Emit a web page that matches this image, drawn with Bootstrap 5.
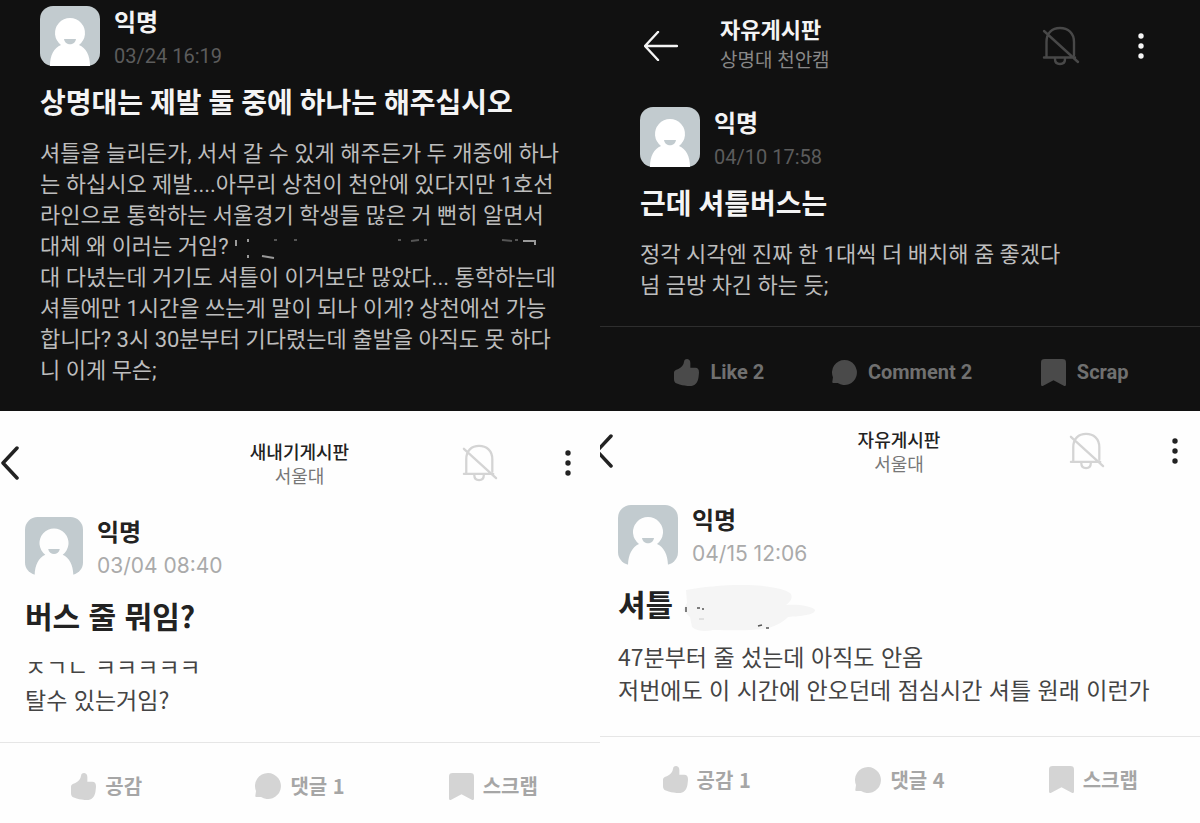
<!DOCTYPE html>
<html lang="ko">
<head>
<meta charset="utf-8">
<meta name="viewport" content="width=device-width, initial-scale=1">
<title>셔틀버스 게시글 모음</title>
<link href="https://cdn.jsdelivr.net/npm/bootstrap@5.3.0/dist/css/bootstrap.min.css" rel="stylesheet">
<style>
body{background:#fefefe;font-family:Roboto,"Noto Sans CJK KR",sans-serif}
.post{--ink:#222;--text:#444;--muted:#aaa;--sub:#777;--bell:#d4d4d4;--rule:#e6e6e6;--icon:#d4d4d4;--label:#a6a6a6;background:#fefefe;color:var(--ink)}
.post.night{--ink:#f4f4f4;--text:#bdbdbd;--muted:#5c5c5c;--sub:#888;--bell:#484848;--rule:#2e2e2e;--icon:#4a4a4a;--label:#707070;background:#111}
.post.day{font-family:"Noto Sans CJK KR",sans-serif}
.post svg{display:block;flex:none}
.plain{background:none;border:0;padding:0;color:inherit}
.post header{margin-bottom:31px}
.titles{padding-left:42px}
.board{font-size:22px;line-height:30px;font-weight:700}
.school{font-size:19px;line-height:30px;color:var(--sub)}
.day .board{font-size:18px;line-height:24px;font-weight:500}
.day .school{font-size:18px;line-height:24px}
.day header{display:grid;grid-template-columns:1fr auto 1fr;margin-bottom:30px}
.bell{color:var(--bell);margin-right:58px}
.day .bell{margin-right:67px}
.author{gap:14px}
.who{font-size:24px;line-height:34px;font-weight:700}
.when{font-size:20px;line-height:32px;color:var(--muted)}
.day .who{line-height:28px;margin-bottom:4px}
.day .when{font-family:Inter,sans-serif;font-size:21px;line-height:34px}
.subject{font-size:28px;line-height:36px;font-weight:700;margin:14px 0 0}
.day .subject{font-size:30px}
.words{font-size:22px;line-height:31px;color:var(--text);margin:16px 0 0}
.day .words{font-size:23px;line-height:33px;margin-top:17px}
.words svg,.subject svg{display:inline-block;vertical-align:middle}
.subject svg{margin:-8px 0}
.actions{border-top:1px solid var(--rule);padding:30px 24px 24px 28px}
.day .actions{padding:28px 10px 20px}
.actions button{flex:1 1 0;font-size:20px;line-height:30px;font-weight:700;color:var(--label);gap:11px}
.actions svg{color:var(--icon)}
.day .actions button{gap:9px}
.pad-a{padding:6px 40px 25px}
.pad-b{padding:16px 40px 0}
.pad-c{padding:28px 25px 26px 0}
.pad-d{padding:16px 18px 30px 0}
.inset-c{padding-left:25px}
.inset-d{padding-left:18px}
</style>
</head>
<body>
<svg width="0" height="0" class="position-absolute" aria-hidden="true">
<symbol id="face" viewBox="0 0 60 60"><rect width="60" height="60" rx="13" fill="#c2cbcf"/><path d="M10 60c0-11 4-18 11-21a15 15 0 1 1 18 0c7 3 11 10 11 21z" fill="#fff"/><path d="M24 33h12c-1 7-11 7-12 0z" fill="#c2cbcf"/></symbol>
<symbol id="face-day" viewBox="0 0 60 60"><rect width="60" height="60" rx="13" fill="#c2cbcf"/><path d="M10 61c0-11 4-19 11-22a15 15 0 1 1 18 0c7 3 11 11 11 22z" fill="#fefefe"/><path d="M24 33h12c-1 7-11 7-12 0z" fill="#c2cbcf"/></symbol>
<symbol id="bell" viewBox="0 0 38 40"><g fill="none" stroke="currentColor" stroke-width="2.4" stroke-linecap="round"><path d="M2 31.500H33M4.500 31V16C4.500 7 10 2 18 2s14 5 14 14v13M13 33c0 3 2 5 5 5s5-2 5-5M2 5l34 31"/></g></symbol>
<symbol id="dots" viewBox="0 0 6 26"><g fill="currentColor"><circle cx="3" cy="3" r="2.700"/><circle cx="3" cy="13" r="2.700"/><circle cx="3" cy="23" r="2.700"/></g></symbol>
<symbol id="like" viewBox="0 0 26 28"><path fill="currentColor" d="M0 15c0-3 1-3.500 4-4.500C8 9 10 6 10.500 2.500 11-1 17-1 17 4v5h5c3 0 4 2 4 5-.3 4-.5 7-2 10-2 4-6 4.500-10 4-4-.3-7-1-11-2.500C1 25 0 23 0 21z"/></symbol>
<symbol id="talk" viewBox="0 0 26 26"><path fill="currentColor" d="M13 0a13 13 0 1 1-7 24H2c-1.500 0-2-.5-1.600-1.800L1 18A13 13 0 0 1 13 0z"/></symbol>
<symbol id="scrap" viewBox="0 0 26 28"><path fill="currentColor" d="M4 0h18c3 0 4 1 4 4v22.500c0 1.500-1 2-2.300 1.200L13 22 2.300 27.700C1 28.500 0 28 0 26.500V4c0-3 1-4 4-4z"/></symbol>
</svg>
<main class="container-fluid p-0">
<div class="row g-0">
<article class="col-6 post night pad-a">
  <div class="author d-flex">
    <svg width="60" height="60" role="img" aria-label="프로필"><use href="#face"/></svg>
    <div><div class="who">익명</div><div class="when">03/24 16:19</div></div>
  </div>
  <h2 class="subject">상명대는 제발 둘 중에 하나는 해주십시오</h2>
  <p class="words text-nowrap">셔틀을 늘리든가, 서서 갈 수 있게 해주든가 두 개중에 하나<br>는 하십시오 제발....아무리 상천이 천안에 있다지만 1호선<br>라인으로 통학하는 서울경기 학생들 많은 거 뻔히 알면서<br>대체 왜 이러는 거임? <svg width="306" height="22" viewBox="0 0 306 22" aria-hidden="true"><g fill="none" stroke="#999" stroke-width="2"><path d="M2 3v6M14 2v3M14 18v3M28 19l12 2M289 4h12v4"/><path d="M40 3h3M60 3h3M164 3h3M177 4l8-1M190 3h3M268 3l10 1M281 3h3" stroke="#555"/></g></svg><br>대 다녔는데 거기도 셔틀이 이거보단 많았다... 통학하는데<br>셔틀에만 1시간을 쓰는게 말이 되나 이게? 상천에선 가능<br>합니다? 3시 30분부터 기다렸는데 출발을 아직도 못 하다<br>니 이게 무슨;</p>
</article>

<article class="col-6 post night d-flex flex-column">
  <div class="pad-b">
    <header class="d-flex align-items-center">
      <button class="plain ms-1" aria-label="뒤로"><svg width="34" height="30" viewBox="0 0 34 30" fill="none" stroke="currentColor" stroke-width="2.400" stroke-linecap="round" stroke-linejoin="round"><path d="M14 1L1 15l13 14M1 15h32"/></svg></button>
      <div class="titles flex-grow-1"><div class="board">자유게시판</div><div class="school">상명대 천안캠</div></div>
      <button class="plain bell" aria-label="알림 꺼짐"><svg width="38" height="40"><use href="#bell"/></svg></button>
      <button class="plain me-3" aria-label="더보기"><svg width="6" height="26"><use href="#dots"/></svg></button>
    </header>
    <div class="author d-flex">
      <svg width="60" height="60" role="img" aria-label="프로필"><use href="#face"/></svg>
      <div><div class="who">익명</div><div class="when">04/10 17:58</div></div>
    </div>
    <h2 class="subject">근데 셔틀버스는</h2>
    <p class="words">정각 시각엔 진짜 한 1대씩 더 배치해 줌 좋겠다<br>넘 금방 차긴 하는 듯;</p>
  </div>
  <div class="actions d-flex mt-auto">
    <button class="plain d-flex align-items-center justify-content-center"><svg width="25" height="27"><use href="#like"/></svg>Like 2</button>
    <button class="plain d-flex align-items-center justify-content-center"><svg width="25" height="25"><use href="#talk"/></svg>Comment 2</button>
    <button class="plain d-flex align-items-center justify-content-center"><svg width="25" height="27"><use href="#scrap"/></svg>Scrap</button>
  </div>
</article>

<article class="col-6 post day">
  <div class="pad-c">
    <header class="align-items-center">
      <button class="plain text-start" aria-label="뒤로"><svg width="20" height="34" viewBox="0 0 20 34" fill="none" stroke="currentColor" stroke-width="3.500" stroke-linecap="round" stroke-linejoin="round"><path d="M17 2L3 17l14 15"/></svg></button>
      <div class="text-center ps-4"><div class="board">새내기게시판</div><div class="school">서울대</div></div>
      <div class="d-flex justify-content-end align-items-center">
        <button class="plain bell" aria-label="알림 꺼짐"><svg width="36" height="38"><use href="#bell"/></svg></button>
        <button class="plain me-1" aria-label="더보기"><svg width="6" height="26"><use href="#dots"/></svg></button>
      </div>
    </header>
    <div class="inset-c">
      <div class="author d-flex">
        <svg width="58" height="58" role="img" aria-label="프로필"><use href="#face-day"/></svg>
        <div><div class="who">익명</div><div class="when">03/04 08:40</div></div>
      </div>
      <h2 class="subject">버스 줄 뭐임?</h2>
      <p class="words">ㅈㄱㄴ ㅋㅋㅋㅋㅋ<br>탈수 있는거임?</p>
    </div>
  </div>
  <div class="actions d-flex">
    <button class="plain d-flex align-items-center justify-content-center"><svg width="25" height="27"><use href="#like"/></svg>공감</button>
    <button class="plain d-flex align-items-center justify-content-center"><svg width="26" height="26"><use href="#talk"/></svg>댓글 1</button>
    <button class="plain d-flex align-items-center justify-content-center"><svg width="25" height="27"><use href="#scrap"/></svg>스크랩</button>
  </div>
</article>

<article class="col-6 post day">
  <div class="pad-d">
    <header class="align-items-center">
      <button class="plain text-start" aria-label="뒤로"><svg width="14" height="34" viewBox="6 0 14 34" fill="none" stroke="currentColor" stroke-width="3.500" stroke-linecap="round" stroke-linejoin="round"><path d="M17 2L3 17l14 15"/></svg></button>
      <div class="text-center ps-3"><div class="board">자유게시판</div><div class="school">서울대</div></div>
      <div class="d-flex justify-content-end align-items-center">
        <button class="plain bell" aria-label="알림 꺼짐"><svg width="36" height="38"><use href="#bell"/></svg></button>
        <button class="plain me-1" aria-label="더보기"><svg width="6" height="26"><use href="#dots"/></svg></button>
      </div>
    </header>
    <div class="inset-d">
      <div class="author d-flex">
        <svg width="60" height="60" role="img" aria-label="프로필"><use href="#face-day"/></svg>
        <div><div class="who">익명</div><div class="when">04/15 12:06</div></div>
      </div>
      <h2 class="subject">셔틀 <svg width="134" height="46" viewBox="0 0 134 46" aria-hidden="true"><path fill="#f5f5f5" d="M4 5C20 2 40 0 60 0c22 0 42 3 48 8 4 4 0 9-4 12 12-1 26 1 29 5 0 5-14 6-27 7-6 6-14 10-25 12-16 2-36 1-50 1-8 2-17 1-21-3L8 32l-7-7 4-7z"/><path d="M4 22v5M15 23h3M20 24h2M76 41l4-1M84 43h3" stroke="#555" stroke-width="1.500"/><path d="M17 34h5" stroke="#ccc"/></svg></h2>
      <p class="words text-nowrap">47분부터 줄 섰는데 아직도 안옴<br>저번에도 이 시간에 안오던데 점심시간 셔틀 원래 이런가</p>
    </div>
  </div>
  <div class="actions d-flex">
    <button class="plain d-flex align-items-center justify-content-center"><svg width="25" height="27"><use href="#like"/></svg>공감 1</button>
    <button class="plain d-flex align-items-center justify-content-center"><svg width="26" height="26"><use href="#talk"/></svg>댓글 4</button>
    <button class="plain d-flex align-items-center justify-content-center"><svg width="25" height="27"><use href="#scrap"/></svg>스크랩</button>
  </div>
</article>
</div>
</main>
<script src="https://cdn.jsdelivr.net/npm/bootstrap@5.3.0/dist/js/bootstrap.bundle.min.js"></script>
</body>
</html>
